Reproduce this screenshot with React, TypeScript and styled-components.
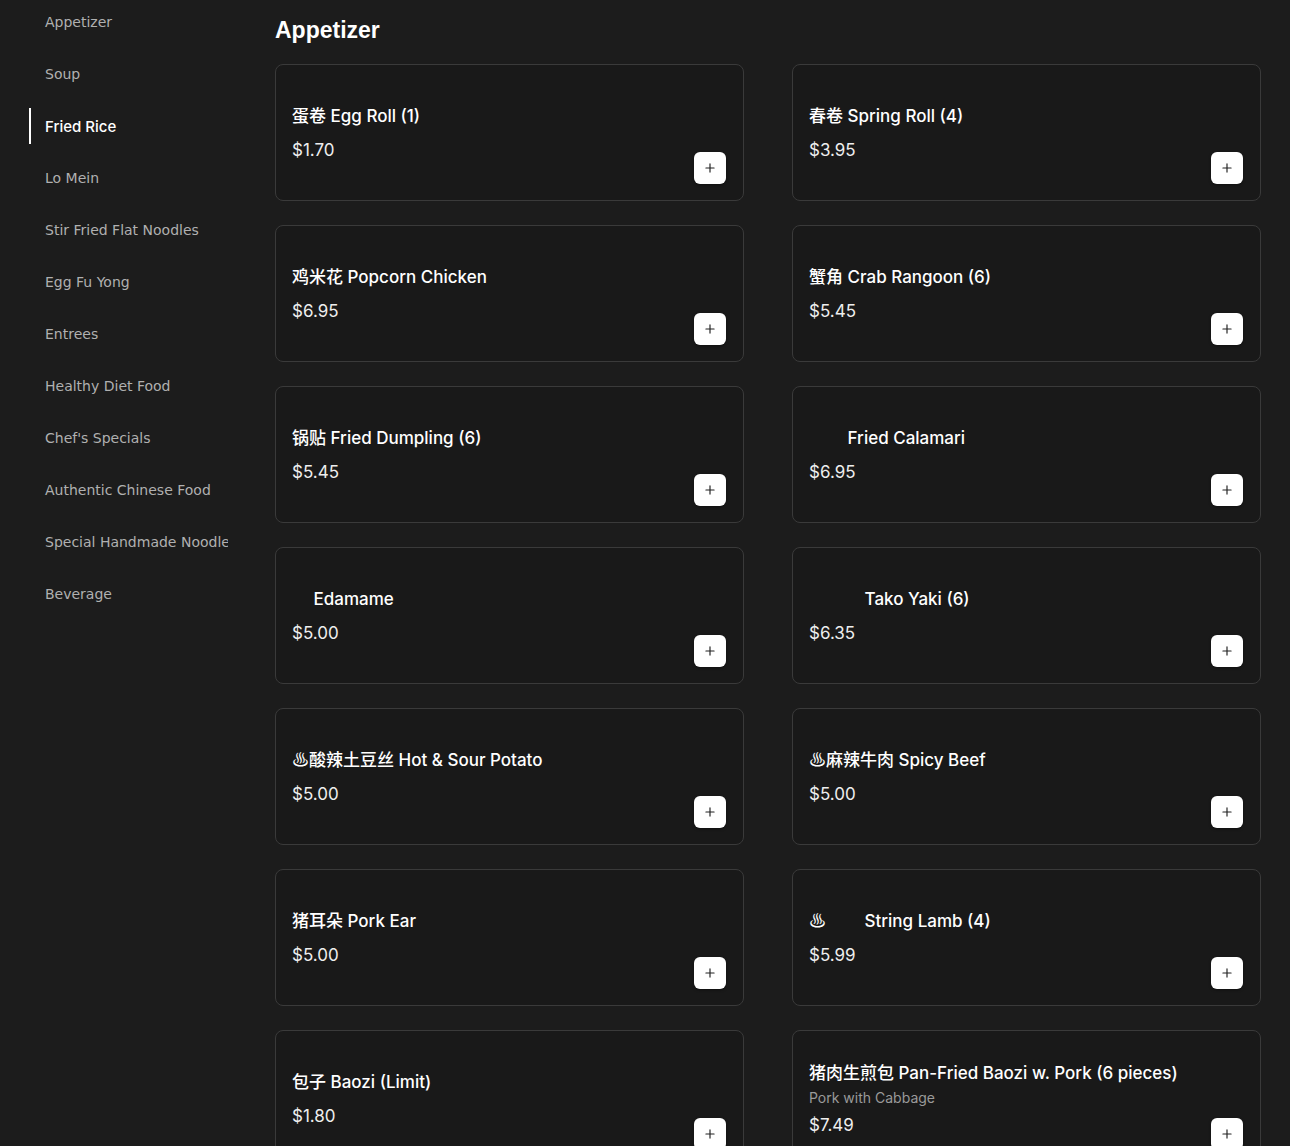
import React from 'react';
import styled, { createGlobalStyle } from 'styled-components';
import { Plus } from 'lucide-react';

type MenuItem = {
  name: string;
  price: string;
  description?: string;
};

const categories = [
  'Appetizer',
  'Soup',
  'Fried Rice',
  'Lo Mein',
  'Stir Fried Flat Noodles',
  'Egg Fu Yong',
  'Entrees',
  'Healthy Diet Food',
  "Chef's Specials",
  'Authentic Chinese Food',
  'Special Handmade Noodles',
  'Beverage',
];

const activeCategory = 'Fried Rice';

const items: MenuItem[] = [
  { name: '蛋卷 Egg Roll (1)', price: '$1.70' },
  { name: '春卷 Spring Roll (4)', price: '$3.95' },
  { name: '鸡米花 Popcorn Chicken', price: '$6.95' },
  { name: '蟹角 Crab Rangoon (6)', price: '$5.45' },
  { name: '锅贴 Fried Dumpling (6)', price: '$5.45' },
  { name: '\u2003\u2003 Fried Calamari', price: '$6.95' },
  { name: '\u2003 Edamame', price: '$5.00' },
  { name: '\u2003\u2003\u2003 Tako Yaki (6)', price: '$6.35' },
  { name: '♨酸辣土豆丝 Hot & Sour Potato', price: '$5.00' },
  { name: '♨麻辣牛肉 Spicy Beef', price: '$5.00' },
  { name: '猪耳朵 Pork Ear', price: '$5.00' },
  { name: '♨\u2003\u2003 String Lamb (4)', price: '$5.99' },
  { name: '包子 Baozi (Limit)', price: '$1.80' },
  {
    name: '猪肉生煎包 Pan-Fried Baozi w. Pork (6 pieces)',
    price: '$7.49',
    description: 'Pork with Cabbage',
  },
];

const App: React.FC = () => {
  return (
    <>
      <GlobalStyle />
      <Page>
        <Sidebar>
          {categories.map((cat) => (
            <CategoryLink key={cat} $active={cat === activeCategory}>
              {cat}
            </CategoryLink>
          ))}
        </Sidebar>

        <Main>
          <SectionTitle>Appetizer</SectionTitle>
          <ItemGrid>
            {items.map((item) => (
              <Card key={item.name}>
                <Info>
                  <ItemName>{item.name}</ItemName>
                  {item.description && <ItemDescription>{item.description}</ItemDescription>}
                  <Price>{item.price}</Price>
                </Info>
                <AddButton aria-label={`Add ${item.name}`}>
                  <Plus size={14} strokeWidth={2} />
                </AddButton>
              </Card>
            ))}
          </ItemGrid>
        </Main>
      </Page>
    </>
  );
};

const GlobalStyle = createGlobalStyle`
  html, body {
    margin: 0;
    padding: 0;
    background-color: #1c1c1c;
  }

  * {
    box-sizing: border-box;
  }
`;

const Page = styled.div`
  display: flex;
  min-height: 1146px;
  background-color: #1c1c1c;
  color: #ffffff;
`;

const Sidebar = styled.nav`
  flex: 0 0 275px;
  width: 275px;
  min-width: 0;
  padding: 4px 47px 0 29px;
  display: flex;
  flex-direction: column;
  gap: 16px;
`;

const CategoryLink = styled.div<{ $active?: boolean }>`
  height: 36px;
  min-width: 0;
  display: flex;
  align-items: center;
  padding-left: 14px;
  border-left: 2px solid ${(p) => (p.$active ? '#ffffff' : 'transparent')};
  color: ${(p) => (p.$active ? '#ffffff' : '#b0b0b0')};
  font-family: ${(p) => (p.$active ? '"Inter", sans-serif' : '"DejaVu Sans", sans-serif')};
  font-size: ${(p) => (p.$active ? '15px' : '14px')};
  font-weight: ${(p) => (p.$active ? 500 : 400)};
  white-space: nowrap;
  overflow: hidden;
  cursor: pointer;
`;

const Main = styled.main`
  flex: 1;
  min-width: 0;
  padding: 16px 29px 0 0;
`;

const SectionTitle = styled.h2`
  margin: 0 0 20px;
  font-family: "Liberation Sans", Arial, sans-serif;
  font-size: 23px;
  line-height: 28px;
  font-weight: 700;
  color: #ffffff;
`;

const ItemGrid = styled.div`
  display: grid;
  grid-template-columns: 1fr 1fr;
  column-gap: 48px;
  row-gap: 24px;
`;

const Card = styled.div`
  min-height: 137px;
  display: flex;
  align-items: center;
  justify-content: space-between;
  padding: 16px 17px 16px 16px;
  background-color: #191919;
  border: 1px solid #3a3a3a;
  border-radius: 8px;
`;

const Info = styled.div`
  display: flex;
  flex-direction: column;
  font-family: "Inter", "Noto Sans CJK SC", sans-serif;
`;

const ItemName = styled.div`
  font-size: 17px;
  line-height: 24px;
  font-weight: 500;
  color: #ffffff;
  margin-bottom: 4px;
  white-space: pre;
`;

const ItemDescription = styled.div`
  font-size: 14px;
  line-height: 18px;
  color: #9a9a9a;
`;

const Price = styled.div`
  margin-top: 6px;
  font-size: 17px;
  line-height: 24px;
  color: #eeeeee;
`;

const AddButton = styled.button`
  align-self: flex-end;
  width: 32px;
  height: 32px;
  display: flex;
  align-items: center;
  justify-content: center;
  padding: 0;
  border: none;
  border-radius: 6px;
  background-color: #ffffff;
  color: #222222;
  box-shadow: 0 1px 3px rgba(0, 0, 0, 0.4);
  cursor: pointer;
`;

export default App;
